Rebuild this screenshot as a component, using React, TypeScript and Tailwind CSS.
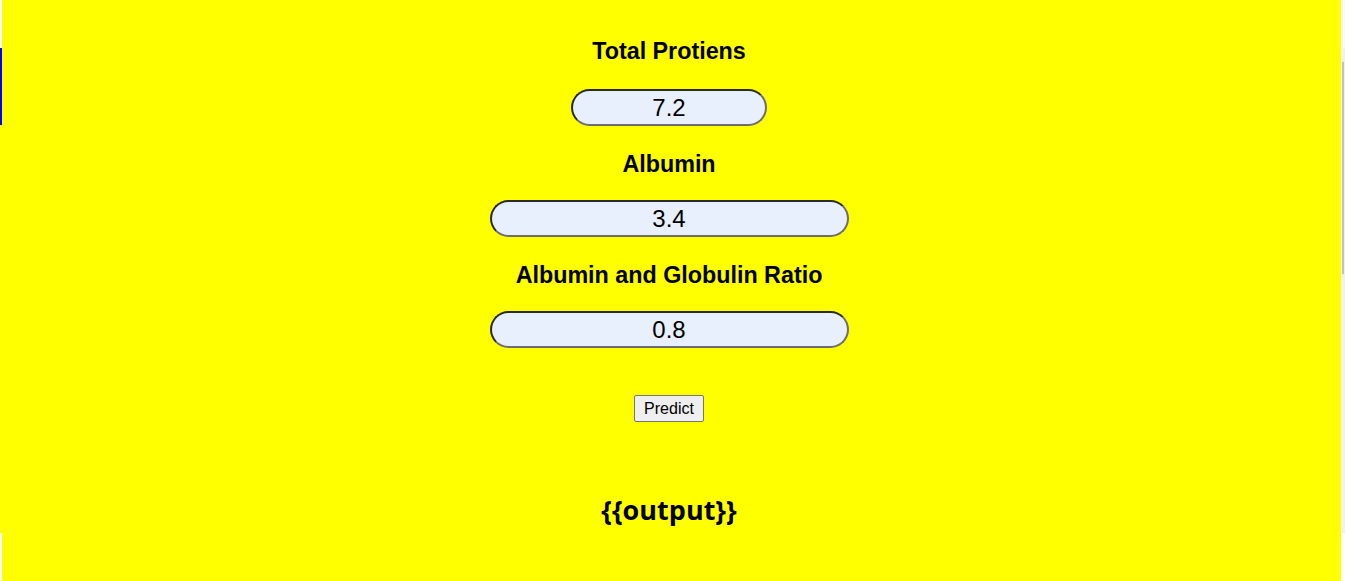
const fields = [
  { label: "Total Protiens", value: "7.2", width: "w-[196px]" },
  { label: "Albumin", value: "3.4", width: "w-[359px]" },
  { label: "Albumin and Globulin Ratio", value: "0.8", width: "w-[359px]" },
];

export default function App() {
  return (
    <div className="flex h-[581px] w-[1345px] overflow-hidden bg-white font-['Liberation_Sans',Arial,sans-serif] text-black">
      {/* left edge strip */}
      <div className="flex w-[2px] flex-col">
        <div className="h-[48px] bg-white" />
        <div className="h-[77px] bg-[#0000ff]" />
        <div className="h-[408px] bg-[#ffff00]" />
        <div className="flex-1 bg-white" />
      </div>

      <main className="flex flex-1 flex-col items-center bg-[#ffff00] pr-[5px]">
        {fields.map((f, i) => (
          <div key={f.label} className="flex flex-col items-center">
            <h3 className={`text-[23.3px] font-bold leading-[27px] ${i === 0 ? "mt-[38px]" : "mt-[25px]"}`}>
              {f.label}
            </h3>
            <input
              readOnly
              value={f.value}
              className={`${f.width} ${i === 0 ? "mt-[24px]" : "mt-[22px]"} h-[37px] rounded-full border-2 border-t-[#2a2a2a] border-l-[#2a2a2a] border-r-[#6e6e6e] border-b-[#6e6e6e] bg-[#e8f0fe] text-center text-[24px] text-black outline-none`}
            />
          </div>
        ))}

        <button className="mt-[47px] h-[27px] rounded-[2px] border border-[#767676] bg-[#efefef] px-[9px] text-[16px] leading-[18px] text-black">
          Predict
        </button>

        <h2 className="mt-[70px] font-['Open_Sans',sans-serif] text-[27px] font-bold leading-[35px]">
          {"{{output}}"}
        </h2>
      </main>

      {/* scrollbar strip */}
      <div className="flex w-[4px] flex-col">
        <div className="h-[48px] bg-[#f8f8f8]" />
        <div className="flex h-[485px] flex-col bg-[#f1f1f1] pt-[14px]">
          <div className="ml-[1px] h-[212px] w-[2px] bg-[#c1c1c1]" />
        </div>
        <div className="flex-1 bg-white" />
      </div>
    </div>
  );
}
